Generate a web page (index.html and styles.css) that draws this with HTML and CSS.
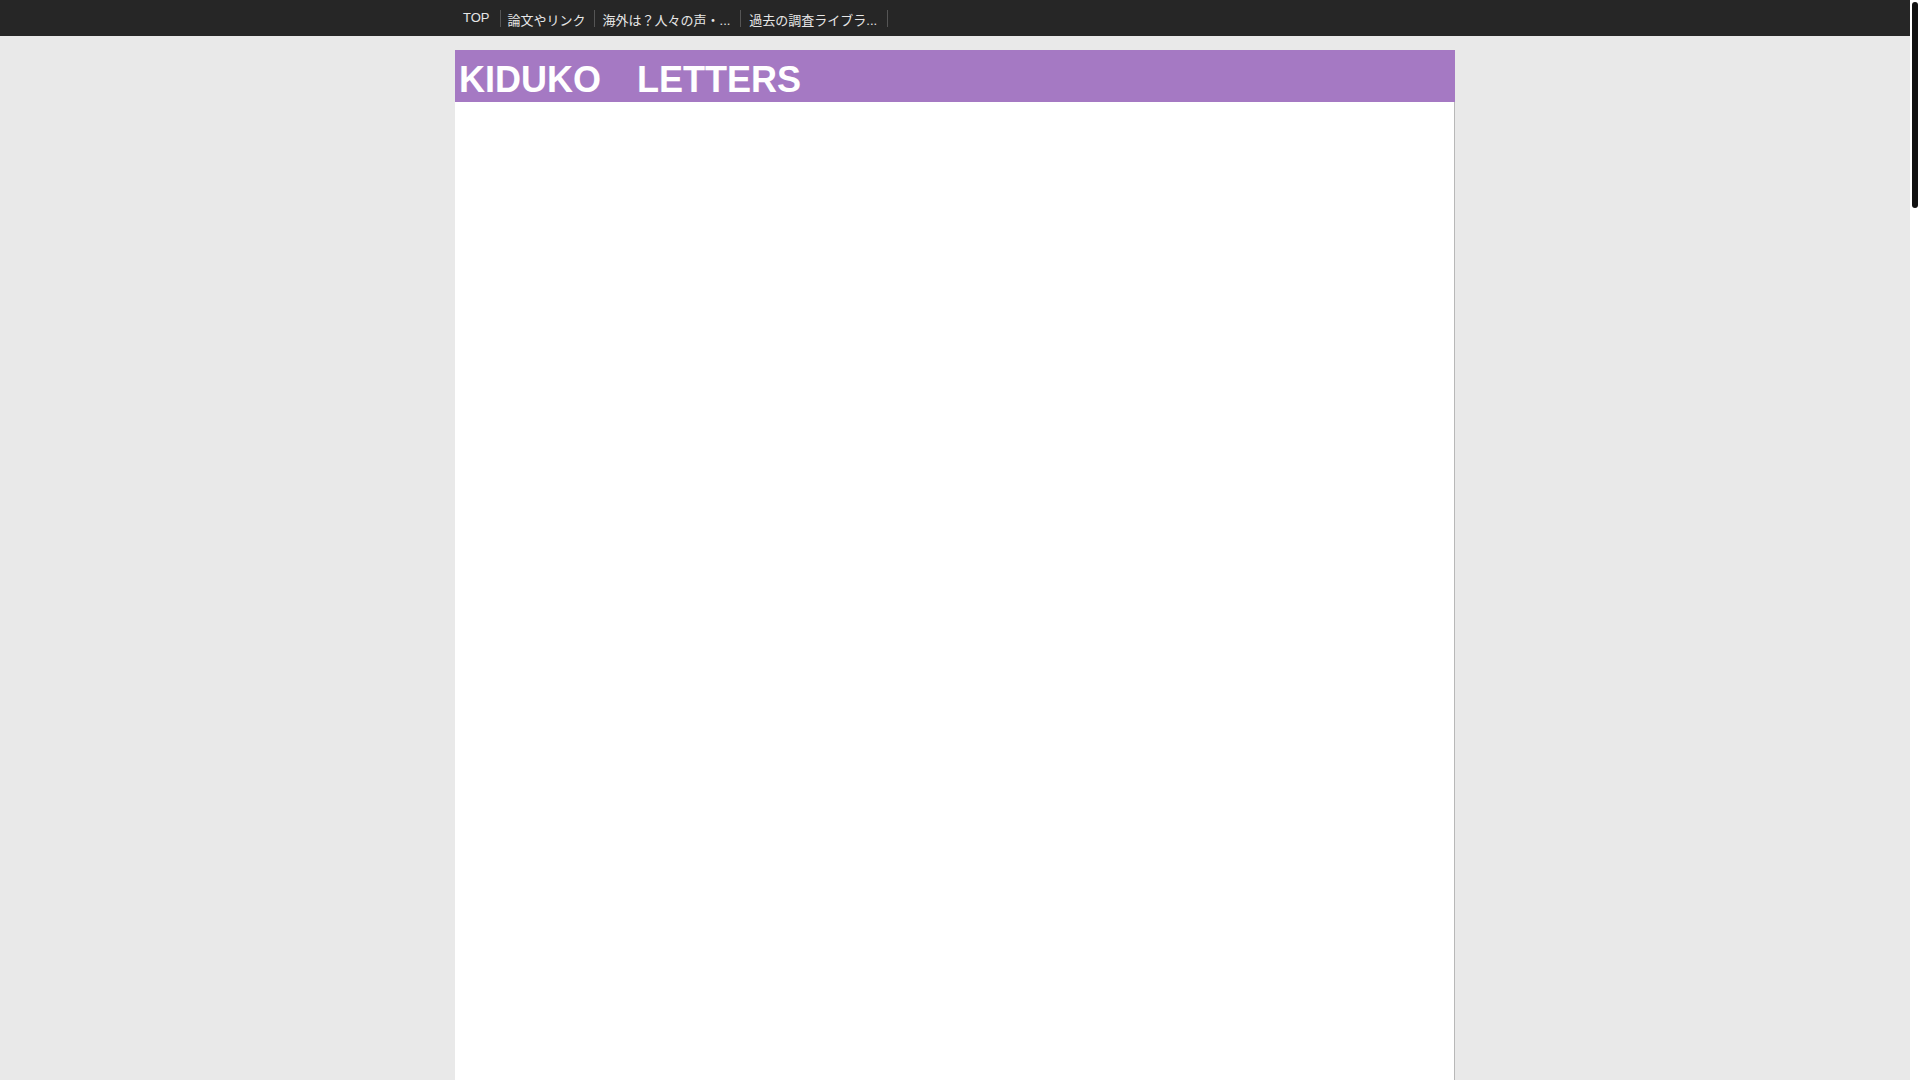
FILE: index.html
```html
<!DOCTYPE html>
<html lang="ja">
<head>
<meta charset="utf-8">
<title>KIDUKO　LETTERS</title>
<link rel="stylesheet" href="styles.css">
</head>
<body>
<div class="viewport">
  <nav class="topbar">
    <ul class="menu">
      <li class="menu-item menu-top"><a href="#">TOP</a></li>
      <li class="menu-item menu-link"><a href="#">論文やリンク</a></li>
      <li class="menu-item menu-wide"><a href="#">海外は？人々の声・...</a></li>
      <li class="menu-item menu-wide"><a href="#">過去の調査ライブラ...</a></li>
      <li class="menu-item menu-end"></li>
    </ul>
  </nav>
  <div class="page">
    <header class="site-header">
      <h1 class="site-title">KIDUKO　LETTERS</h1>
    </header>
    <main class="content"></main>
  </div>
</div>
<div class="scrollbar" aria-hidden="true">
  <div class="scrollbar-thumb"></div>
</div>
</body>
</html>
```

FILE: styles.css
```css
html {
  background: #e9e9e9;
}
body {
  margin: 0;
  font-family: "Liberation Sans", "Noto Sans CJK JP", sans-serif;
  background: #e9e9e9;
  display: flex;
  align-items: flex-start;
}
.viewport {
  flex: 1;
  min-width: 0;
}
.scrollbar {
  width: 10px;
  height: 1080px;
  background: #ffffff;
  flex: none;
}
.scrollbar-thumb {
  margin: 2px 2px 0;
  height: 206px;
  background: #111111;
  border-radius: 3px;
}
.topbar {
  height: 36px;
  background: #262626;
}
.menu {
  width: 1000px;
  margin: 0 auto;
  padding: 0;
  list-style: none;
  display: flex;
  align-items: flex-start;
  height: 36px;
}
.menu-item {
  height: 17px;
  margin-top: 10px;
  border-left: 1px solid #555555;
  font-size: 13px;
  white-space: nowrap;
}
.menu-item a {
  display: block;
  line-height: 17px;
  padding: 2px 10px 0 7px;
  color: #e6e6e6;
  text-decoration: none;
}
.menu-top {
  border-left: none;
  margin-top: 9px;
}
.menu-top a {
  padding: 0 10px 0 8px;
}
.menu-link a {
  padding-right: 8px;
}
.menu-wide a {
  padding-left: 8px;
}
.page {
  width: 1000px;
  margin: 14px auto 0;
}
.site-header {
  height: 52px;
  background: #a579c3;
  box-sizing: border-box;
  padding: 12px 0 0 4px;
}
.site-title {
  margin: 0;
  font-size: 36px;
  line-height: 36px;
  font-weight: bold;
  color: #ffffff;
  white-space: nowrap;
}
.content {
  display: block;
  height: 5560px;
  background: #ffffff;
  border-right: 1px solid #b8b8b8;
  width: 999px;
}
```
